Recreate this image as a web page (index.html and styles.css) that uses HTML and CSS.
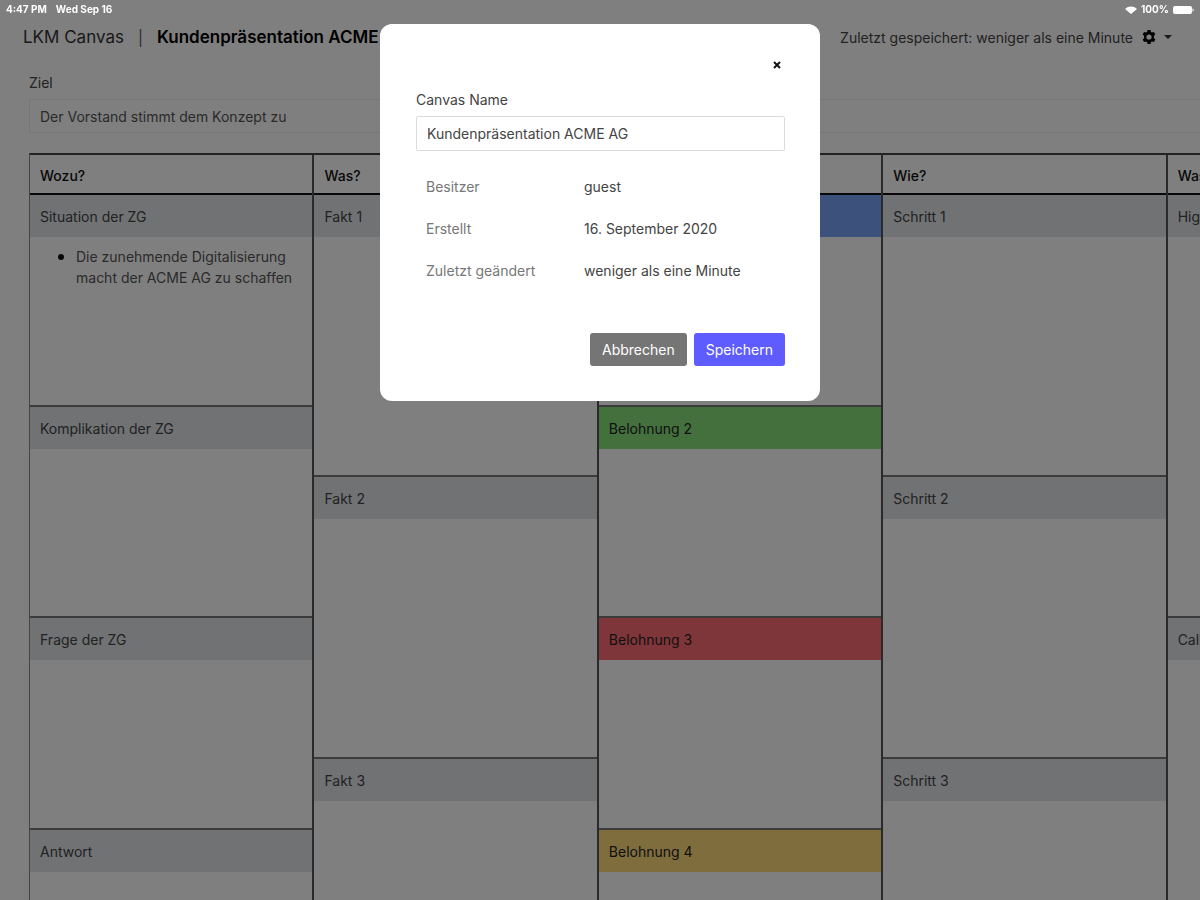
FILE: index.html
```html
<!DOCTYPE html>
<html lang="de">
<head>
<meta charset="utf-8">
<meta name="viewport" content="width=device-width, initial-scale=1">
<title>LKM Canvas</title>
<link rel="stylesheet" href="styles.css">
</head>
<body>
<div class="status">
  <div class="status-group"><span>4:47 PM</span><span>Wed Sep 16</span></div>
  <div class="status-group status-right">
    <svg width="12" height="8" viewBox="0 0 12 8" aria-hidden="true"><path d="M6 8 0 3a8.500 8.500 0 0 1 12 0z" fill="#fff"/></svg>
    <span>100%</span>
    <svg width="21" height="8" viewBox="0 0 21 8" aria-hidden="true"><rect width="19" height="8" rx="2" fill="#fff"/><path d="M19.500 2.500c1.600 0 1.600 3 0 3z" fill="#fff"/></svg>
  </div>
</div>
<header class="topbar">
  <a class="brand" href="#">LKM Canvas</a>
  <span class="divider">|</span>
  <h1 class="title">Kundenpräsentation ACME AG</h1>
  <span class="saved">Zuletzt gespeichert: weniger als eine Minute</span>
  <button class="settings" type="button" aria-label="Einstellungen">
    <svg width="14" height="14" viewBox="0 0 14 14" aria-hidden="true"><path fill="#000" fill-rule="evenodd" d="M5.500 0h3l.4 1.900 1.100.6 1.900-.6 1.500 2.600-1.500 1.300v2.400l1.500 1.300-1.500 2.600-1.900-.6-1.100.6-.4 1.900h-3l-.4-1.900-1.100-.6-1.900.6L.6 9.500l1.500-1.300V5.800L.6 4.500l1.500-2.600 1.900.6 1.100-.6zM7 4.400a2.600 2.600 0 1 0 0 5.200 2.600 2.600 0 0 0 0-5.200z"/></svg>
    <svg width="8" height="4" viewBox="0 0 8 4" aria-hidden="true"><path d="M0 0h8L4 4z" fill="#333"/></svg>
  </button>
</header>
<main class="canvas">
  <div class="fields">
    <div class="field"><label for="ziel">Ziel</label><input id="ziel" type="text" value="Der Vorstand stimmt dem Konzept zu"></div>
    <div class="field"><label for="gruppe">Zielgruppe</label><input id="gruppe" type="text"></div>
  </div>
  <div class="board">
    <section class="column">
      <h2>Wozu?</h2>
      <div class="cell"><h3>Situation der ZG</h3><ul><li>Die zunehmende Digitalisierung macht der ACME AG zu schaffen</li></ul></div>
      <div class="cell"><h3>Komplikation der ZG</h3></div>
      <div class="cell"><h3>Frage der ZG</h3></div>
      <div class="cell"><h3>Antwort</h3></div>
    </section>
    <section class="column">
      <h2>Was?</h2>
      <div class="cell"><h3>Fakt 1</h3></div>
      <div class="cell"><h3>Fakt 2</h3></div>
      <div class="cell"><h3>Fakt 3</h3></div>
    </section>
    <section class="column">
      <h2>Warum?</h2>
      <div class="cell"><h3 class="blue">Belohnung 1</h3></div>
      <div class="cell"><h3 class="green">Belohnung 2</h3></div>
      <div class="cell"><h3 class="red">Belohnung 3</h3></div>
      <div class="cell"><h3 class="yellow">Belohnung 4</h3></div>
    </section>
    <section class="column">
      <h2>Wie?</h2>
      <div class="cell"><h3>Schritt 1</h3></div>
      <div class="cell"><h3>Schritt 2</h3></div>
      <div class="cell"><h3>Schritt 3</h3></div>
    </section>
    <section class="column">
      <h2>Was noch?</h2>
      <div class="cell"><h3>Highlight</h3></div>
      <div class="cell"><h3>Call to Action</h3></div>
    </section>
  </div>
</main>
<div class="backdrop">
  <form class="modal" role="dialog" aria-modal="true" aria-label="Canvas">
    <button class="close" type="button" aria-label="Schließen"><svg width="8" height="8" viewBox="0 0 8 8" aria-hidden="true"><path d="m1 1 6 6M7 1 1 7" stroke="#111" stroke-width="2"/></svg></button>
    <label class="name-label" for="name">Canvas Name</label>
    <input class="name" id="name" type="text" value="Kundenpräsentation ACME AG">
    <dl class="meta">
      <dt>Besitzer</dt><dd>guest</dd>
      <dt>Erstellt</dt><dd>16. September 2020</dd>
      <dt>Zuletzt geändert</dt><dd>weniger als eine Minute</dd>
    </dl>
    <div class="actions">
      <button class="btn" type="button">Abbrechen</button>
      <button class="btn primary" type="button">Speichern</button>
    </div>
  </form>
</div>
</body>
</html>
```
FILE: styles.css
```css
* { box-sizing: border-box; }
body {
  margin: 0;
  height: 100vh;
  overflow: hidden;
  background: #fff;
  color: #444;
  font: 14px/21px Inter, "Open Sans", sans-serif;
}
button, input { font: inherit; color: inherit; }
.status {
  position: relative;
  z-index: 3;
  display: flex;
  justify-content: space-between;
  height: 19px;
  padding: 0 6px;
  color: #fff;
  font-size: 10px;
  font-weight: 700;
  line-height: 19px;
}
.status-group { display: flex; align-items: center; gap: 9px; }
.status-right { gap: 4px; }
.topbar {
  display: flex;
  align-items: center;
  height: 36px;
  padding: 0 28px 0 23px;
  font-size: 17px;
  white-space: nowrap;
}
.brand { color: #333; text-decoration: none; }
.divider { margin: 0 14px; color: #555; font-size: 15px; }
.title { margin: 0; color: #000; font-size: 17px; font-weight: 600; }
.saved { margin-left: auto; font-size: 14px; }
.settings {
  display: flex;
  align-items: center;
  gap: 8px;
  margin-left: 9px;
  padding: 0;
  border: 0;
  background: none;
}
.canvas { min-width: 1452px; padding: 17px 0 0 29px; }
.fields { display: grid; grid-template-columns: 1fr 1fr; }
.field { display: flex; flex-direction: column; gap: 6px; }
.field input {
  height: 34px;
  padding: 0 10px;
  border: 1px solid #ececec;
  background: #fff;
  color: #555;
}
.board {
  display: flex;
  height: 886px;
  margin-top: 20px;
  border-left: 1px solid #888;
}
.column {
  flex: 1;
  display: flex;
  flex-direction: column;
  border-top: 2px solid #444;
  border-right: 2px solid #555;
}
.column h2 {
  margin: 0;
  height: 40px;
  padding: 0 10px;
  border-bottom: 2px solid #111;
  color: #111;
  font-size: 14px;
  font-weight: 500;
  line-height: 42px;
}
.cell { flex: 1 1 0; border-top: 2px solid #777; }
h2 + .cell { border-top: 0; }
.cell h3 {
  margin: 0;
  height: 42px;
  padding: 0 10px;
  background: #e0e4e8;
  color: #444;
  font-size: 14px;
  font-weight: 400;
  line-height: 44px;
}
.cell .blue { background: #78a4f8; }
.cell .green { background: #88e07c; color: #222; }
.cell .red { background: #ff6c76; color: #222; }
.cell .yellow { background: #ffda7c; color: #222; }
.cell ul { margin: 0; padding: 8px 16px 0 46px; color: #555; }
.cell li::marker { color: #111; font-size: 18px; }
.backdrop {
  position: fixed;
  inset: 0;
  z-index: 2;
  padding-top: 24px;
  background: rgba(0, 0, 0, .5);
}
.modal {
  display: flex;
  flex-direction: column;
  width: 440px;
  max-width: 100%;
  margin: 0 auto;
  padding: 35px 35px 35px 36px;
  border-radius: 12px;
  background: #fff;
}
.close {
  display: flex;
  align-self: flex-end;
  padding: 2px 4px;
  margin-bottom: 18px;
  border: 0;
  background: none;
}
.name-label { margin-bottom: 6px; }
.name {
  height: 35px;
  padding: 0 10px;
  border: 1px solid #d8dcde;
  border-radius: 2px;
}
.meta {
  display: grid;
  grid-template-columns: 158px 1fr;
  margin: 15px 0 41px;
  padding: 0 10px;
  line-height: 42px;
}
.meta dt { color: #777; }
.meta dd { margin: 0; }
.actions { display: flex; justify-content: flex-end; gap: 7px; }
.btn {
  height: 33px;
  padding: 0 12px;
  border: 0;
  border-radius: 3px;
  background: #757575;
  color: #fff;
}
.primary { background: #5e5cff; }
```
